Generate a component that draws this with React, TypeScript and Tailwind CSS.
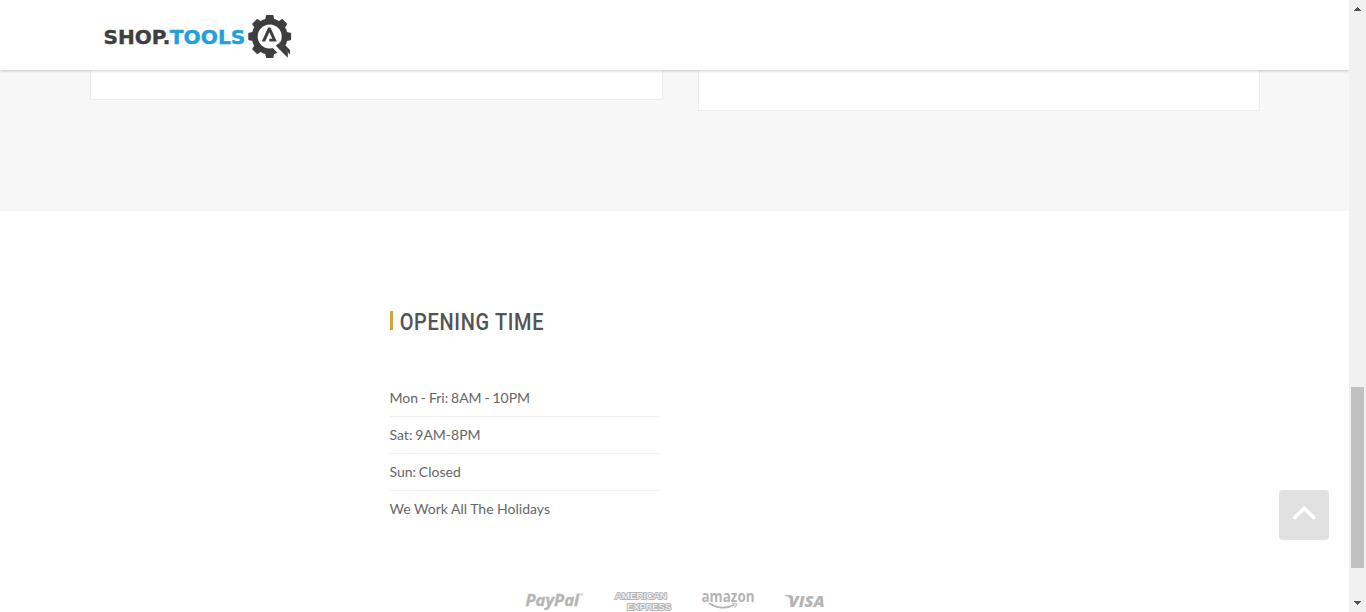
const hours = [
  { text: "Mon - Fri: 8AM - 10PM", spacing: "[word-spacing:-0.75px]" },
  { text: "Sat: 9AM-8PM", spacing: "[word-spacing:-0.7px]" },
  { text: "Sun: Closed", spacing: "[word-spacing:-0.8px]" },
  { text: "We Work All The Holidays", spacing: "[word-spacing:0px]" },
];
const teeth = [0, 45, 90, 135, 180, 225, 270, 315];

function Logo() {
  return (
    <svg width="190" height="48" viewBox="103 12 190 48" role="img" aria-label="Shop.Tools">
      <g fontFamily="DejaVu Sans, sans-serif" fontWeight="700" fontSize="20.3" strokeWidth="0.4">
        <text x="103.5" y="43.7" textLength="67" lengthAdjust="spacingAndGlyphs" fill="#3f3f3f" stroke="#3f3f3f">SHOP.</text>
        <text x="169.8" y="43.7" textLength="75.5" lengthAdjust="spacingAndGlyphs" fill="#22a0dc" stroke="#22a0dc">TOOLS</text>
      </g>
      <g fill="#3e3e3e">
        <circle cx="269.7" cy="36.5" r="18" />
        {teeth.map((a) => (
          <path key={a} d="M264.8 22 265.9 15.8Q266 15.1 266.7 15.1H272.7Q273.4 15.1 273.5 15.8L274.6 22Z" transform={`rotate(${a} 269.7 36.5)`} />
        ))}
      </g>
      <circle cx="269.7" cy="36.5" r="12" fill="#fff" />
      <path d="M272.3 47.5 278.5 43 290 55.5V60H284.4Z" fill="#fff" />
      <path d="M278.8 42.8 290 54.4V50L282 42Z" fill="#3e3e3e" />
      <path d="M278.8 43.2 287.8 52V57.8L275.8 45.8Z" fill="#3e3e3e" />
      <path d="M261.8 41.5 267.8 28.2Q268.3 27.2 269.3 27.2T270.8 28.2L276.8 41.5H269.3V38.8H272.4L269.3 32.2 265.2 41.5Z" fill="#3e3e3e" />
    </svg>
  );
}

function Payments() {
  return (
    <svg className="block" width="304" height="28" viewBox="523 584 304 28" fill="#b5b5b5">
      <text x="525.5" y="605.6" fontFamily="Open Sans, sans-serif" fontSize="15.5" fontWeight="700" fontStyle="italic" textLength="53.5" lengthAdjust="spacingAndGlyphs" stroke="#b5b5b5" strokeWidth="0.3">PayPal</text>
      <text x="579" y="595.5" fontFamily="Liberation Sans, sans-serif" fontSize="3">TM</text>
      <g fontFamily="Liberation Sans, sans-serif" fontSize="9.4" fontWeight="400" fill="#fff" stroke="#b5b5b5" strokeWidth="2.2" paintOrder="stroke" strokeLinejoin="round">
        <text x="615.3" y="599" textLength="51.5" lengthAdjust="spacingAndGlyphs">AMERICAN</text>
        <text x="627" y="609.8" textLength="44" lengthAdjust="spacingAndGlyphs">EXPRESS</text>
      </g>
      <text x="701.5" y="602" fontFamily="Open Sans, sans-serif" fontSize="15.5" fontWeight="700" textLength="53" lengthAdjust="spacingAndGlyphs">amazon</text>
      <path d="M709 603.2Q722 611.2 734.5 604.7" fill="none" stroke="#b5b5b5" strokeWidth="1.7" />
      <path d="M731.8 603.5Q735 602.5 736.5 603.6 736.7 605.7 734.5 607.5" fill="none" stroke="#b5b5b5" strokeWidth="1.1" />
      <text x="788.5" y="606.8" fontFamily="Open Sans, sans-serif" fontSize="16" fontWeight="800" fontStyle="italic" textLength="36" lengthAdjust="spacingAndGlyphs">VISA</text>
      <path d="M785 595H790.2Q792 595 792.4 597L793.7 603Q791.3 597.4 785 595.7Z" />
    </svg>
  );
}

export default function App() {
  return (
    <div className="flex h-[612px] overflow-hidden bg-white">
      <div className="relative flex w-[1349px] flex-col overflow-hidden">
        <header className="z-10 h-[70px] shrink-0 bg-white pt-3 pl-[103px] shadow-[0_1px_3px_rgba(0,0,0,0.2)]">
          <Logo />
        </header>
        <section className="flex h-[141px] shrink-0 items-start gap-[35px] bg-[#f7f7f7] pl-[90px]">
          <div className="h-[30px] w-[573px] border border-t-0 border-[#ededed] bg-white" />
          <div className="h-[41px] w-[562px] border border-t-0 border-[#ededed] bg-white" />
        </section>
        <footer className="flex grow flex-col">
          <div className="ml-[390px] w-[270px] pt-[95px]">
            <h2 className="flex h-[30px] items-center">
              <span className="mb-[2px] h-[19px] w-[3px] shrink-0 bg-[#d0a539]" />
              <svg className="ml-[5px] shrink-0 overflow-visible" width="160" height="30" viewBox="0 0 160 30">
                <text x="1.7" y="23.6" textLength="144.5" lengthAdjust="spacingAndGlyphs" fontFamily="Roboto, sans-serif" fontSize="24" fontWeight="500" letterSpacing="0.8" fill="#535353">OPENING TIME</text>
              </svg>
            </h2>
            <ul className="mt-[44px] font-['Lato',sans-serif] text-[14px] leading-[36px] text-[#666]">
              {hours.map(({ text, spacing }) => (
                <li key={text} className={`h-[37px] border-b border-[#f0f0f0] -indent-[0.5px] last:border-transparent ${spacing}`}>{text}</li>
              ))}
            </ul>
          </div>
          <div className="mt-[56px] ml-[523px]"><Payments /></div>
        </footer>
        <button aria-label="Back to top" className="absolute top-[490px] right-[20px] h-[50px] w-[50px] rounded-[4px] bg-[#e1e1e1]">
          <svg width="50" height="50" fill="none" stroke="#fff" strokeWidth="3.6" strokeLinecap="round"><path d="M15.8 27.5 25.2 18.2 34.6 27.5" /></svg>
        </button>
      </div>
      <div className="flex w-[17px] flex-col items-center bg-[#f1f1f1]">
        <svg className="shrink-0" width="17" height="17" shapeRendering="crispEdges"><path d="M5 11 8.5 7 12 11Z" fill="#505050" /></svg>
        <div className="mt-[370px] h-[181px] w-[13px] bg-[#c1c1c1]" />
        <svg className="mt-auto shrink-0" width="17" height="17" shapeRendering="crispEdges"><path d="M5 6H12L8.5 10Z" fill="#505050" /></svg>
      </div>
    </div>
  );
}
